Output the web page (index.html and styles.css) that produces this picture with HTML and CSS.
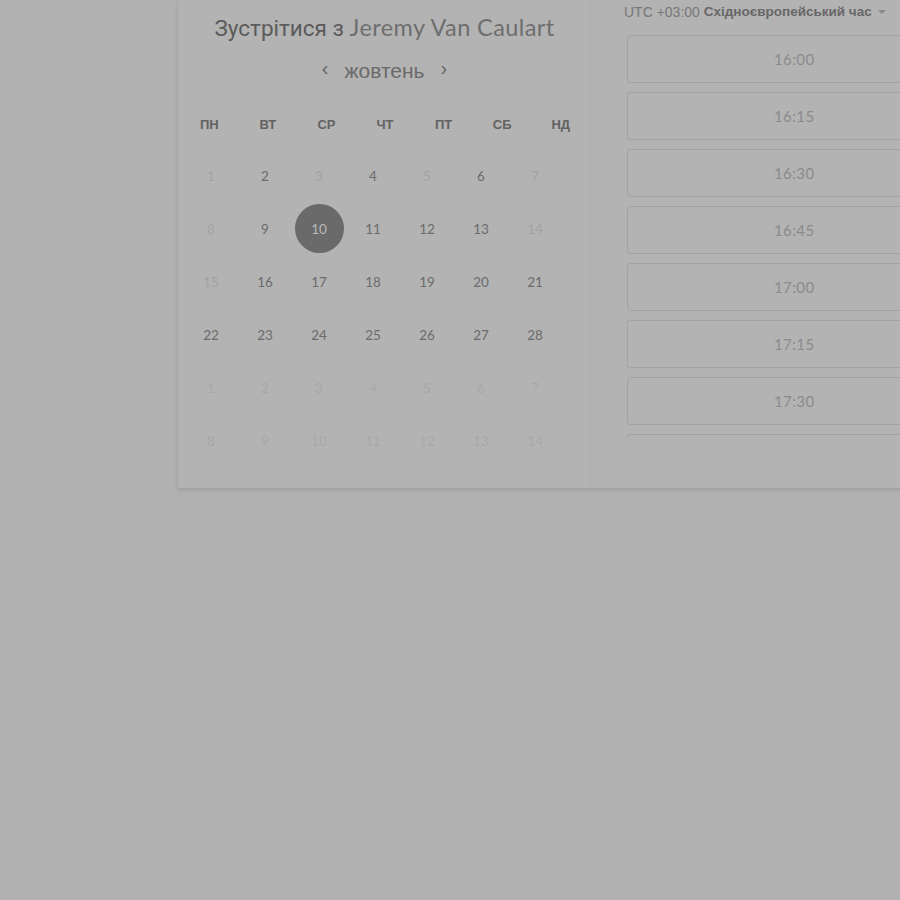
FILE: index.html
```html
<!DOCTYPE html>
<html lang="uk">
<head>
<meta charset="utf-8">
<link rel="stylesheet" href="styles.css">
</head>
<body>
<div class="page">
  <div class="card">
    <section class="cal">
      <h1 class="title"><span class="t-strong">Зустрітися з </span><span class="t-name">Jeremy Van Caulart</span></h1>
      <div class="month">
        <span class="arrow">&#8249;</span>
        <span class="month-name">жовтень</span>
        <span class="arrow">&#8250;</span>
      </div>
      <div class="weekdays">
        <span>ПН</span><span>ВТ</span><span>СР</span><span>ЧТ</span><span>ПТ</span><span>СБ</span><span>НД</span>
      </div>
      <div class="dates">
        <span class="d off">1</span><span class="d">2</span><span class="d off">3</span><span class="d">4</span><span class="d off">5</span><span class="d">6</span><span class="d off">7</span>
        <span class="d off">8</span><span class="d">9</span><span class="d sel"><span class="circle">10</span></span><span class="d">11</span><span class="d">12</span><span class="d">13</span><span class="d off">14</span>
        <span class="d off">15</span><span class="d">16</span><span class="d">17</span><span class="d">18</span><span class="d">19</span><span class="d">20</span><span class="d">21</span>
        <span class="d">22</span><span class="d">23</span><span class="d">24</span><span class="d">25</span><span class="d">26</span><span class="d">27</span><span class="d">28</span>
        <span class="d next">1</span><span class="d next">2</span><span class="d next">3</span><span class="d next">4</span><span class="d next">5</span><span class="d next">6</span><span class="d next">7</span>
        <span class="d next">8</span><span class="d next">9</span><span class="d next">10</span><span class="d next">11</span><span class="d next">12</span><span class="d next">13</span><span class="d next">14</span>
      </div>
    </section>
    <section class="times">
      <div class="tz">UTC +03:00 <b>Східноєвропейський час</b><span class="caret"></span></div>
      <div class="slots">
        <div class="slot">16:00</div>
        <div class="slot">16:15</div>
        <div class="slot">16:30</div>
        <div class="slot">16:45</div>
        <div class="slot">17:00</div>
        <div class="slot">17:15</div>
        <div class="slot">17:30</div>
        <div class="slot"></div>
      </div>
    </section>
  </div>
</div>
</body>
</html>
```
FILE: styles.css
```css
html, body {
  margin: 0;
  padding: 0;
  background: #b1b1b1;
  overflow: hidden;
}
body {
  width: 900px;
  height: 900px;
  font-family: "Liberation Sans", Arial, sans-serif;
}
.page {
  padding-left: 178px;
}
.card {
  display: flex;
  width: 760px;
  height: 488px;
  background: #b3b3b3;
  border-left: 1px solid #aeaeae;
  box-shadow: 0 2px 4px rgba(0,0,0,0.12);
}
.cal {
  width: 412px;
  flex: none;
  border-right: 1px solid #afafaf;
  box-sizing: border-box;
}
.title {
  margin: 0;
  height: 53px;
  line-height: 50px;
  padding-bottom: 3px;
  box-sizing: border-box;
  text-align: center;
  font-weight: normal;
  white-space: nowrap;
}
.t-strong {
  font-family: Roboto, "Liberation Sans", sans-serif;
  font-size: 22.5px;
  color: #5b5b5b;
  white-space: pre;
}
.t-name {
  font-family: Lato, "Open Sans", sans-serif;
  font-size: 23.5px;
  color: #6e6e6e;
  letter-spacing: 0.4px;
}
.month {
  height: 34px;
  display: flex;
  align-items: center;
  justify-content: center;
  gap: 16px;
  color: #666;
}
.month-name {
  font-family: "Liberation Sans", Arial, sans-serif;
  font-size: 21px;
  color: #6a6a6a;
  margin-top: 2px;
}
.arrow {
  font-size: 20px;
  color: #666;
  line-height: 1;
  margin-top: -4px;
}
.weekdays {
  height: 30px;
  margin-top: 22px;
  display: grid;
  grid-template-columns: repeat(7, 1fr);
  align-items: center;
  text-align: center;
  font-weight: bold;
  font-size: 13px;
  color: #626262;
  padding-left: 1px;
}
.dates {
  margin-top: 10px;
  margin-left: 5px;
  width: 378px;
  display: grid;
  grid-template-columns: repeat(7, 1fr);
  grid-auto-rows: 53px;
  font-family: Lato, "Open Sans", sans-serif;
  font-size: 13.5px;
  color: #6b6b6b;
}
.d {
  display: flex;
  align-items: center;
  justify-content: center;
}
.d.off { color: #a3a3a3; }
.d.next { color: #a8a8a8; }
.circle {
  width: 49px;
  height: 49px;
  border-radius: 50%;
  background: #6a6a6a;
  color: #b9b9b9;
  display: flex;
  align-items: center;
  justify-content: center;
}
.times {
  flex: 1;
  padding-left: 36px;
  box-sizing: border-box;
}
.tz {
  height: 23px;
  margin-left: -3px;
  font-size: 14px;
  color: #777;
  display: flex;
  align-items: center;
  white-space: pre;
}
.tz b {
  color: #676767;
  font-size: 13.5px;
}
.caret {
  display: inline-block;
  width: 0;
  height: 0;
  margin-left: 6px;
  border-left: 4px solid transparent;
  border-right: 4px solid transparent;
  border-top: 4px solid #8a8a8a;
}
.slots {
  margin-top: 12px;
  height: 403px;
  overflow: hidden;
}
.slot {
  width: 330px;
  height: 48px;
  box-sizing: border-box;
  border: 1px solid #a3a3a3;
  border-radius: 3px;
  margin-bottom: 9px;
  display: flex;
  align-items: center;
  padding-left: 146px;
  font-family: Lato, "Open Sans", sans-serif;
  font-size: 15px;
  color: #8b8b8b;
  letter-spacing: 0.4px;
}
```
